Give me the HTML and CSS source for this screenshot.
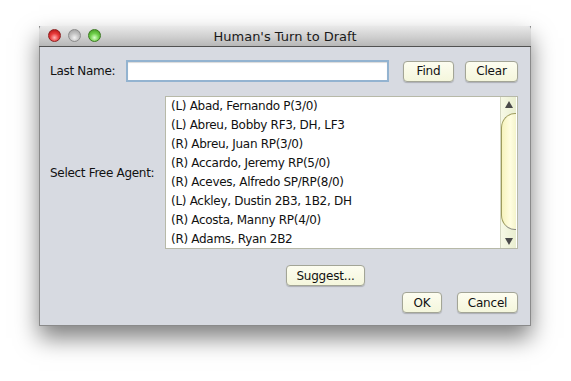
FILE: index.html
```html
<html>

<head>
    <title>Human's Turn to Draft</title>
    <link rel="stylesheet" href="styles.css">
</head>

<body>
    <div class="window">
        <div class="titlebar">
            <div class="lights">
                <span class="light light-close"></span>
                <span class="light light-min"></span>
                <span class="light light-max"></span>
            </div>
            <div class="title">Human's Turn to Draft</div>
        </div>
        <div class="content">
            <div class="row row-search">
                <label class="label label-name">Last Name:</label>
                <input class="form-input" type="text">
                <button class="btn btn-find">Find</button>
                <button class="btn btn-clear">Clear</button>
            </div>
            <div class="row row-list">
                <label class="label label-agent">Select Free Agent:</label>
                <div class="list">
                    <ul class="list-items">
                        <li>(L) Abad, Fernando P(3/0)</li>
                        <li>(L) Abreu, Bobby RF3, DH, LF3</li>
                        <li>(R) Abreu, Juan RP(3/0)</li>
                        <li>(R) Accardo, Jeremy RP(5/0)</li>
                        <li>(R) Aceves, Alfredo SP/RP(8/0)</li>
                        <li>(L) Ackley, Dustin 2B3, 1B2, DH</li>
                        <li>(R) Acosta, Manny RP(4/0)</li>
                        <li>(R) Adams, Ryan 2B2</li>
                    </ul>
                    <div class="scrollbar">
                        <span class="arrow arrow-up"></span>
                        <div class="track">
                            <div class="thumb"></div>
                        </div>
                        <span class="arrow arrow-down"></span>
                    </div>
                </div>
            </div>
            <div class="row row-suggest">
                <button class="btn btn-suggest">Suggest...</button>
            </div>
            <div class="row row-actions">
                <button class="btn btn-ok">OK</button>
                <button class="btn btn-cancel">Cancel</button>
            </div>
        </div>
    </div>
</body>

</html>
```

FILE: styles.css
```css
body {
    font-family: "DejaVu Sans", sans-serif;
    font-size: 12px;
    color: #111111;
    background-color: #ffffff;
    margin: 0;
    padding: 26px 0 0 39px;
}

.window {
    width: 492px;
    height: 300px;
    background-color: #d7dae1;
    border: 1px solid #8a8a8a;
    border-top: none;
    box-sizing: border-box;
    box-shadow: 0 12px 22px rgba(0, 0, 0, 0.5);
}

.titlebar {
    position: relative;
    height: 21px;
    background: linear-gradient(#e9e9e9, #cfcfcf 55%, #b7b7b7);
    border-bottom: 1px solid #515151;
    box-sizing: border-box;
    border-radius: 4px 4px 0 0;
    margin: 0 -1px;
}

.lights {
    position: absolute;
    left: 9px;
    top: 3px;
    display: flex;
    gap: 7px;
}

.light {
    width: 13px;
    height: 13px;
    border-radius: 50%;
    box-sizing: border-box;
}

.light-close {
    background: radial-gradient(circle at 50% 70%, #ffb3b3, #e83a3a 45%, #a50d0d);
    border: 1px solid #8e2020;
}

.light-min {
    background: radial-gradient(circle at 50% 70%, #f2f2f2, #c4c4c4 45%, #9a9a9a);
    border: 1px solid #8c8c8c;
}

.light-max {
    background: radial-gradient(circle at 50% 70%, #d8ffc8, #6fcf4a 45%, #3d8f1c);
    border: 1px solid #3c7a22;
}

.title {
    text-align: center;
    font-size: 13px;
    line-height: 21px;
    color: #1a1a1a;
}

.content {
    padding: 13px 12px 0 10px;
}

.row {
    display: flex;
    align-items: center;
}

.row > * {
    flex-shrink: 0;
}

.label {
    color: #111111;
    letter-spacing: -0.3px;
}

.label-name {
    width: 76px;
}

.form-input {
    width: 263px;
    height: 22px;
    padding: 0 4px;
    border: 2px solid #93b3d0;
    box-shadow: inset 0 1px 1px rgba(0, 0, 0, 0.15);
    background-color: #ffffff;
    box-sizing: border-box;
    outline: none;
}

.btn {
    font-family: "DejaVu Sans", sans-serif;
    font-size: 12px;
    letter-spacing: -0.2px;
    color: #111111;
    height: 21px;
    padding: 0;
    border: 1px solid #a3a596;
    border-radius: 4px;
    background: linear-gradient(#fdfdf0, #f4f6dc);
    box-shadow: 0 1px 1px rgba(0, 0, 0, 0.2);
    cursor: pointer;
}

.btn-find {
    width: 51px;
    margin-left: 14px;
}

.btn-clear {
    width: 53px;
    margin-left: 11px;
}

.row-list {
    margin-top: 14px;
}

.label-agent {
    width: 115px;
}

.list {
    display: flex;
    width: 353px;
    height: 153px;
    border: 1px solid #b7b9a8;
    background-color: #ffffff;
    box-sizing: border-box;
}

.list-items {
    flex: 1;
    list-style: none;
    margin: 0;
    padding: 0 0 0 5px;
    letter-spacing: -0.3px;
}

.list-items li {
    height: 19px;
    line-height: 19px;
    white-space: nowrap;
}

.scrollbar {
    width: 15px;
    display: flex;
    flex-direction: column;
    background: linear-gradient(90deg, #f7f9e6, #e9eed0);
    border-left: 1px solid #d4d7c2;
    margin-right: 1px;
}

.arrow {
    height: 14px;
    display: flex;
    justify-content: center;
    align-items: center;
}

.arrow::before {
    content: "";
    border-left: 4px solid transparent;
    border-right: 4px solid transparent;
}

.arrow-up::before {
    border-bottom: 7px solid #4a4a4a;
}

.arrow-down::before {
    border-top: 7px solid #4a4a4a;
}

.track {
    flex: 1;
    padding: 2px 0 4px;
}

.thumb {
    height: 100%;
    border: 1px solid #9e9c5e;
    border-right: none;
    border-radius: 14px 0 0 14px / 15px 0 0 15px;
    background: linear-gradient(90deg, #f6f3bd, #fffde0 60%, #f4f4cc);
    box-sizing: border-box;
    border-bottom-color: #8a8a80;
}

.row-suggest {
    margin-top: 16px;
    padding-left: 236px;
}

.btn-suggest {
    width: 79px;
}

.row-actions {
    justify-content: flex-end;
    margin-top: 6px;
}

.btn-ok {
    width: 40px;
}

.btn-cancel {
    width: 61px;
    margin-left: 15px;
}
```
